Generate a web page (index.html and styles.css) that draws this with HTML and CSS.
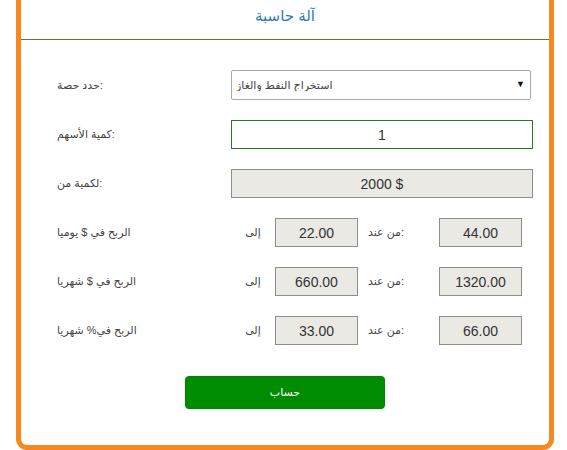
FILE: index.html
```html
<!DOCTYPE html>
<html lang="ar">
<head>
    <meta charset="UTF-8">
    <meta name="viewport" content="width=device-width, initial-scale=1.0">
    <title>آلة حاسبة</title>
    <link rel="stylesheet" href="styles.css">
</head>
<body>
<div class="calc">
    <div class="calc-header">آلة حاسبة</div>

    <form class="calc-body" onsubmit="return false;">
        <div class="row">
            <label class="label" for="share">حدد حصة:</label>
            <div class="select-wrap">
                <select id="share" class="select">
                    <option>استخراج النفط والغاز</option>
                </select>
                <span class="arrow">&#9660;</span>
            </div>
        </div>

        <div class="row">
            <label class="label" for="qty">كمية الأسهم:</label>
            <input type="text" id="qty" class="field field-active" value="1">
        </div>

        <div class="row">
            <label class="label" for="amount">لكمية من:</label>
            <input type="text" id="amount" class="field field-readonly" value="2000 $" readonly>
        </div>

        <!-- lignes de profit : min / max -->
        <div class="row">
            <span class="label">الربح في $ يوميا</span>
            <span class="to">إلى</span>
            <input type="text" class="box" value="22.00" readonly>
            <span class="from">من عند:</span>
            <input type="text" class="box" value="44.00" readonly>
        </div>

        <div class="row">
            <span class="label">الربح في $ شهريا</span>
            <span class="to">إلى</span>
            <input type="text" class="box" value="660.00" readonly>
            <span class="from">من عند:</span>
            <input type="text" class="box" value="1320.00" readonly>
        </div>

        <div class="row">
            <span class="label">الربح في% شهريا</span>
            <span class="to">إلى</span>
            <input type="text" class="box" value="33.00" readonly>
            <span class="from">من عند:</span>
            <input type="text" class="box" value="66.00" readonly>
        </div>

        <div class="actions">
            <button type="submit" class="calc-btn">حساب</button>
        </div>
    </form>
</div>
</body>
</html>
```

FILE: styles.css
```css
body {
    margin: 0 0 0 16px;
    background-color: #ffffff;
    font-family: "Liberation Sans", "DejaVu Sans", sans-serif;
    color: #333;
}

.calc {
    width: 538px;
    box-sizing: border-box;
    border: 5px solid #f7881f;
    border-top: 0;
    border-radius: 0 0 11px 11px;
    background-color: #fff;
}

.calc-header {
    height: 33px;
    padding-top: 6px;
    line-height: 20px;
    text-align: center;
    font-size: 15px;
    color: #2d7cb5;
    border-bottom: 1px solid #4f7f22;
}

.calc-body {
    display: flex;
    flex-direction: column;
    gap: 20px;
    padding: 30px 0 36px 36px;
    margin: 0;
}

.row {
    display: flex;
    align-items: center;
    height: 29px;
}

.row:first-child {
    height: 30px;
}

.label {
    width: 174px;
    font-size: 11px;
    color: #444;
}

/* liste deroulante */
.select-wrap {
    position: relative;
    width: 300px;
    height: 30px;
}

.select {
    appearance: none;
    -webkit-appearance: none;
    width: 100%;
    height: 30px;
    box-sizing: border-box;
    border: 1px solid #a9a9a9;
    border-radius: 2px;
    background-color: #fff;
    padding: 0 4px;
    font-family: "Liberation Sans", "DejaVu Sans", sans-serif;
    font-size: 11px;
    color: #444;
    text-align: left;
    direction: ltr;
}

.arrow {
    position: absolute;
    right: 6px;
    top: 9px;
    font-size: 9px;
    color: #111;
    pointer-events: none;
}

.field {
    width: 302px;
    height: 29px;
    box-sizing: border-box;
    padding: 0;
    text-align: center;
    font-family: "Liberation Sans", sans-serif;
    font-size: 14px;
    color: #333;
}

.field-active {
    border: 1px solid #267a26;
    background-color: #fff;
    outline: none;
}

.field-readonly,
.box {
    border: 1px solid #8e8e8e;
    background-color: #ebe9e3;
    outline: none;
}

.to {
    width: 44px;
    text-align: center;
    font-size: 11px;
    color: #444;
}

.box {
    width: 83px;
    height: 29px;
    box-sizing: border-box;
    padding: 0;
    text-align: center;
    font-family: "Liberation Sans", sans-serif;
    font-size: 14px;
    color: #333;
}

.from {
    width: 71px;
    padding-left: 10px;
    font-size: 11px;
    color: #444;
}

.actions {
    margin-top: 11px;
    padding-right: 36px;
    display: flex;
    justify-content: center;
}

.calc-btn {
    width: 200px;
    height: 33px;
    border: 1px solid #0b7d0b;
    border-radius: 4px;
    background-color: #008c00;
    color: #fff;
    font-family: "Liberation Sans", "DejaVu Sans", sans-serif;
    font-size: 11px;
    cursor: pointer;
    box-shadow: 0 0 2px rgba(0, 0, 0, 0.25);
}

.calc-btn:hover {
    background-color: #007500;
}
```
